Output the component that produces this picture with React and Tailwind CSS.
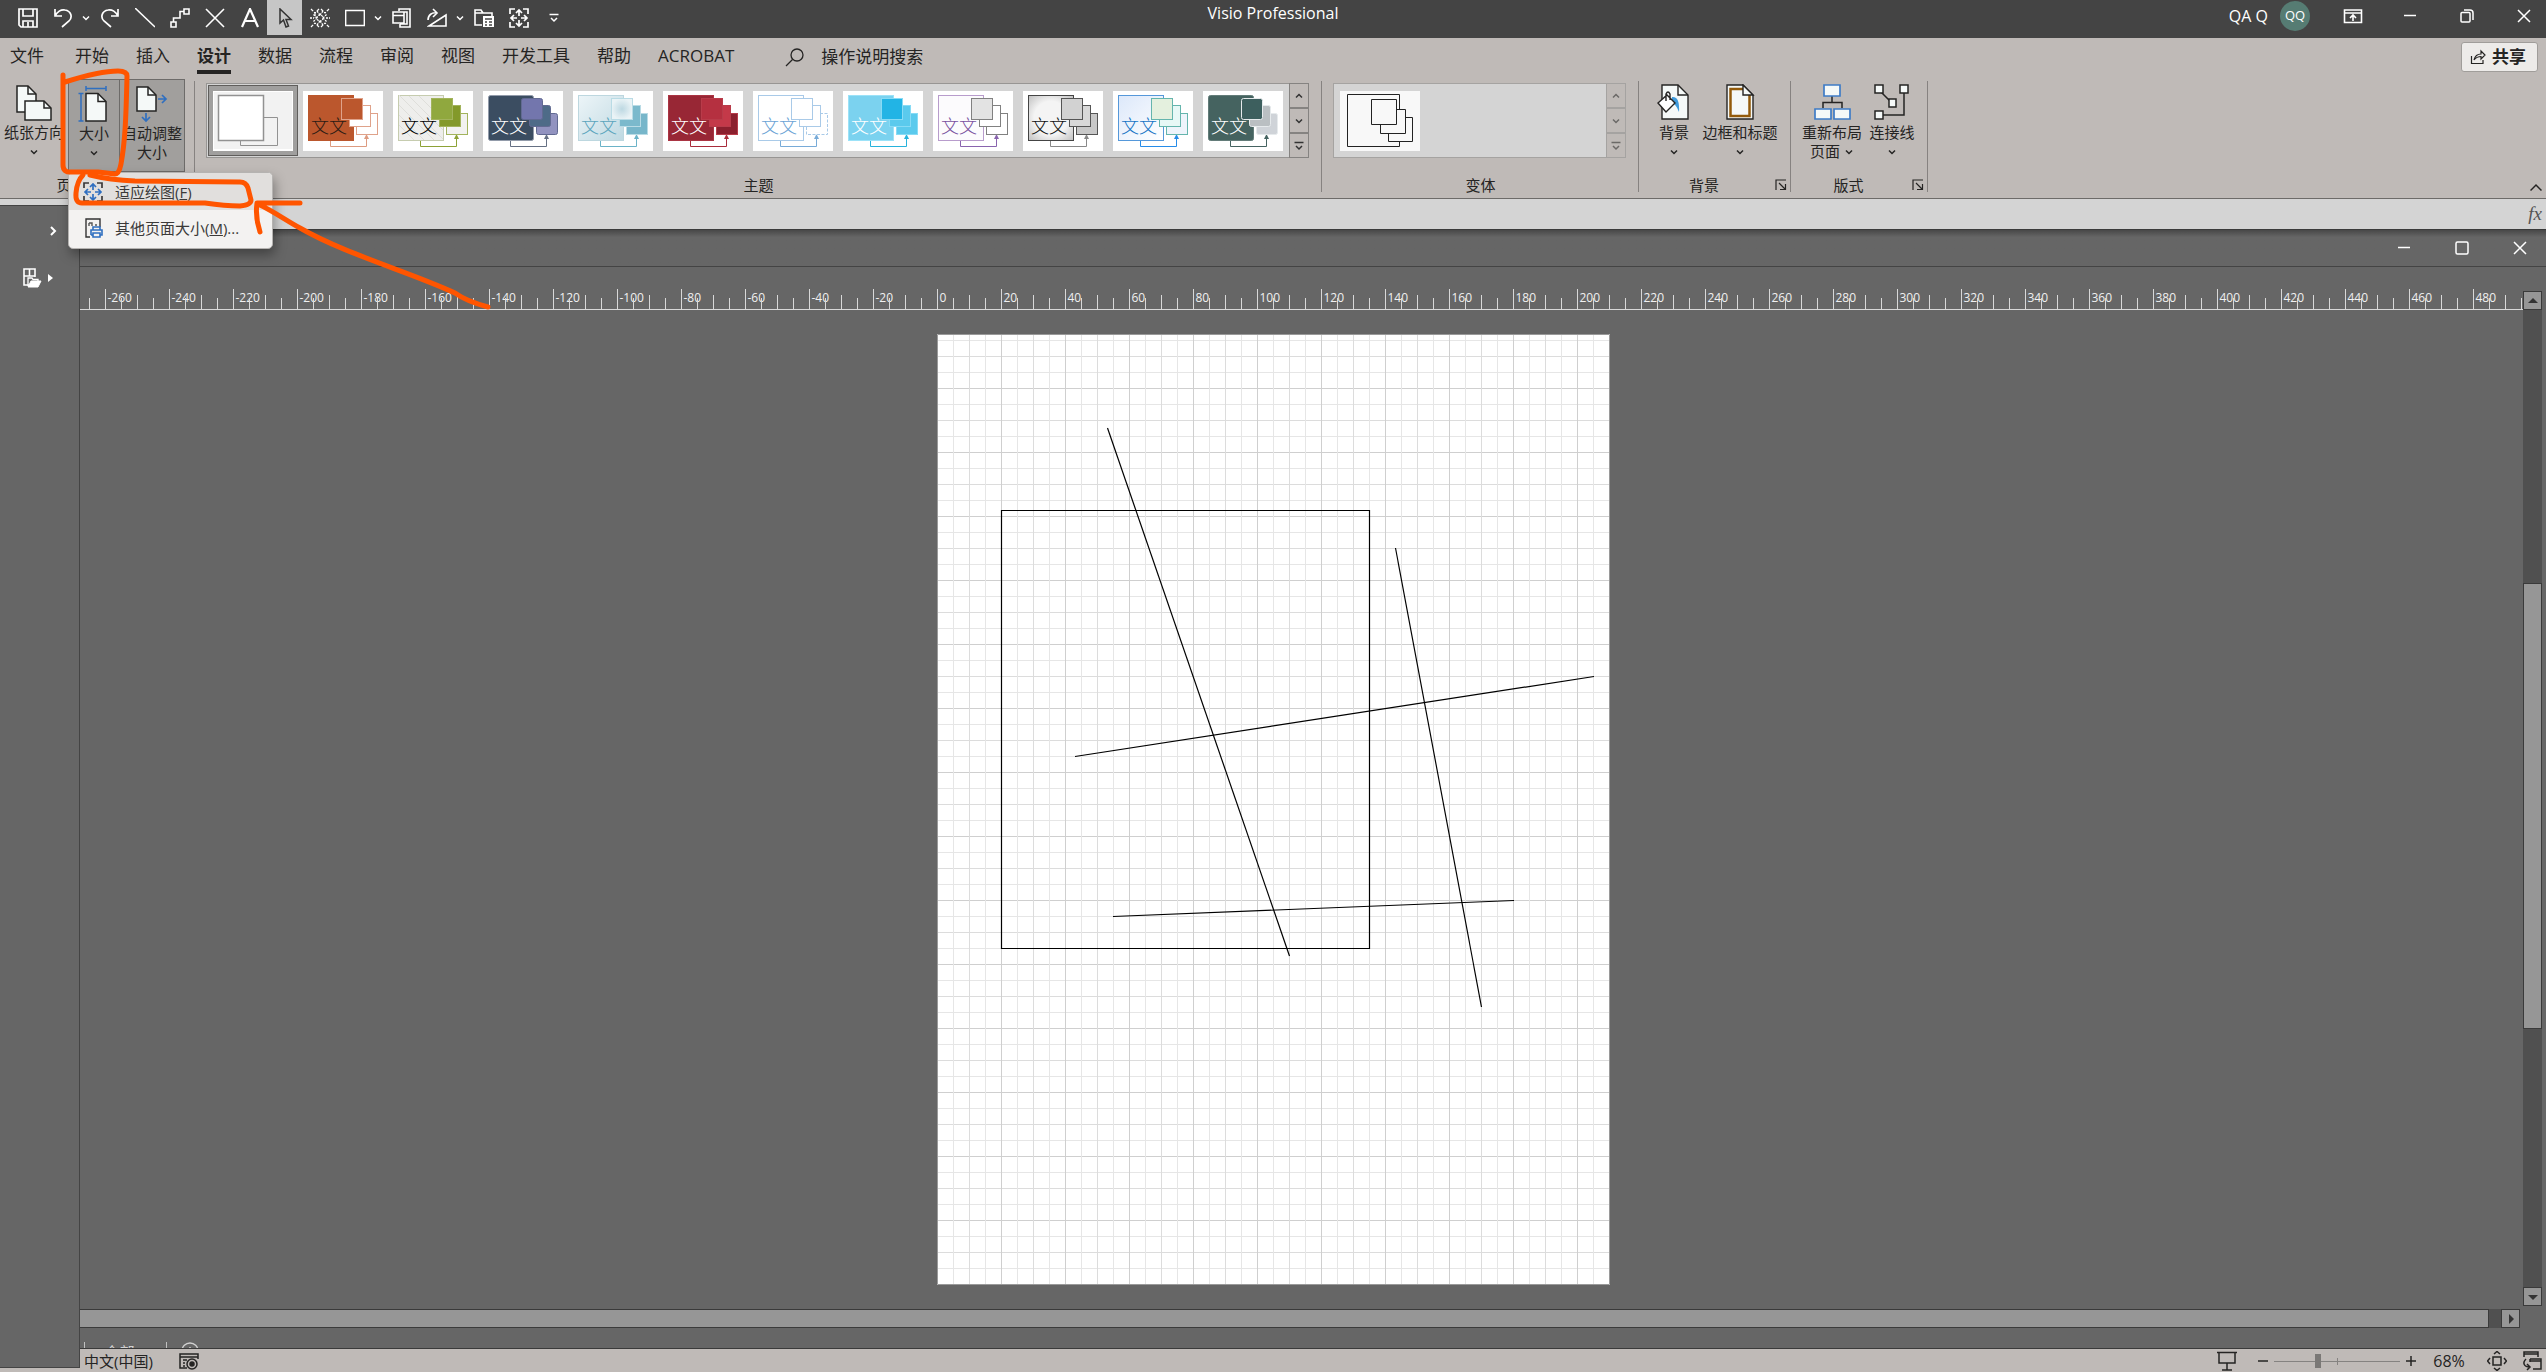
import { useState } from "react";

const FONT = "font-['Open_Sans','Noto_Sans_CJK_SC',sans-serif]";

// Small icon helpers
function Icon({ children, size = 20, color = "currentColor", width = 1.3 }) {
    return (
        <svg
            width={size}
            height={size}
            viewBox={`0 0 ${size} ${size}`}
            fill="none"
            stroke={color}
            strokeWidth={width}
            className="shrink-0"
            aria-hidden="true"
        >
            {children}
        </svg>
    );
}

function Chevron({ up = false, bar = false }) {
    return (
        <svg width="10" height="10" viewBox="0 0 10 10" fill="none" stroke="currentColor" strokeWidth="1.5" aria-hidden="true">
            {bar && <path d="M0.500 1.500H9.500" />}
            <path d={up ? "M2 6.500L5 3.500L8 6.500" : bar ? "M2 5L5 8L8 5" : "M2 3.500L5 6.500L8 3.500"} />
        </svg>
    );
}

function FitIcon({ arrows = "currentColor" }) {
    return (
        <Icon width={1.7}>
            <path d="M1 6V1H6M14 1H19V6M19 14V19H14M6 19H1V14" />
            <path stroke={arrows} d="M10 8V2M7 5L10 2L13 5M10 12V18M7 15L10 18L13 15M8 10H2M5 7L2 10L5 13M12 10H18M15 7L18 10L15 13" />
        </Icon>
    );
}

const quickTools = [
    { name: "保存", icon: <Icon width={1.7}><path d="M1 1H19V19H3L1 17ZM5 1V8H15V1M5 19V13H15V19M10 14V19" /></Icon> },
    { name: "撤消", menu: true, icon: <Icon width={1.7}><path d="M2 1V8H9M2 8C4 4 8 1 12 2C18 3 20 9 16 13L9 19" /></Icon> },
    { name: "恢复", icon: <Icon width={1.7}><path d="M18 1V8H11M18 8C16 4 12 1 8 2C2 3 0 9 4 13L11 19" /></Icon> },
    { name: "线条", icon: <Icon width={1.6}><path d="M0 0L20 19" /></Icon> },
    { name: "连接线", icon: <Icon width={1.6}><path d="M14 1H19V6H14ZM1 14H6V19H1ZM14 3.500H10V10H3.500V14" /></Icon> },
    { name: "连接点", icon: <Icon width={1.6}><path d="M1 1L19 19M19 1L1 19" /></Icon> },
    { name: "文本", icon: <Icon width={2.2}><path d="M2 19L10 1L18 19M5 13H15" /></Icon> },
    { name: "指针工具", active: true, icon: <Icon width={1.5}><path d="M5 1V15L8.500 12L11 19L13.500 18L11 11.500H16Z" /></Icon> },
    {
        name: "组合",
        icon: (
            <Icon width={1.3}>
                <path strokeDasharray="3 1.500" d="M1 1L5 5M9 1L5 5M5 5V10M11 1L15 5M19 1L15 5M1 19L5 15M9 19L5 15M11 19L15 15M19 19L15 15" />
                <circle cx="10" cy="10" r="3" strokeDasharray="2 1" />
                <path strokeDasharray="2 1" d="M7 10L3 6M7 10L3 14M13 10L17 6M13 10L17 14M0 10H4M16 10H20M10 7L7 3M10 7L13 3M10 13L7 17M10 13L13 17" />
            </Icon>
        ),
    },
    { name: "矩形", menu: true, icon: <Icon width={1.4}><path d="M0.700 2.500H19.300V17.500H0.700Z" /></Icon> },
    { name: "置于顶层", icon: <Icon width={1.6}><path d="M7 3V1H18V19H8V16M1 4H12V15H1ZM1 7.500H12M12 4H15V16H8" /></Icon> },
    { name: "旋转", menu: true, icon: <Icon width={1.6}><path d="M2 18H19V7ZM1 12C1 7 5 4 10 5M6 1L10 5L6 9" /></Icon> },
    {
        name: "文件夹",
        icon: (
            <Icon width={1.6}>
                <path d="M8 17H1V2H7L9 5H18V9M1 5H9" />
                <path fill="currentColor" stroke="none" d="M9 8H20V19H9Z" />
                <path stroke="#444" d="M11 11H18M11 14H13M11 17H13M15 14H18M15 17H18" />
            </Icon>
        ),
    },
    { name: "适应绘图", icon: <FitIcon /> },
];

function TitleBar() {
    return (
        <header className="flex h-[38px] shrink-0 items-start bg-[#444444] text-white">
            <div className="flex-1">
                <div className="ml-[10px] flex h-[35px]">
                    {quickTools.map((tool) => (
                        <div key={tool.name} className="flex">
                            <button
                                aria-label={tool.name}
                                className={`flex h-[35px] w-[35px] items-center justify-center ${tool.active ? "bg-[#c6c6c6] text-[#333]" : ""}`}
                            >
                                {tool.icon}
                            </button>
                            {tool.menu && (
                                <button aria-label={`${tool.name}选项`} className="flex w-3 items-center justify-center">
                                    <Chevron />
                                </button>
                            )}
                        </div>
                    ))}
                    <button aria-label="自定义快速访问工具栏" className="flex w-9 items-center justify-center">
                        <Chevron bar />
                    </button>
                </div>
            </div>
            <h1 className="pt-[3px] text-[16px] leading-5">Visio Professional</h1>
            <div className="flex h-8 flex-1 items-center justify-end">
                <span className="text-[16px]">QA Q</span>
                <span className="mr-[21px] ml-3 flex h-[30px] w-[30px] items-center justify-center rounded-full bg-[#567c73] text-[13px]">QQ</span>
                <div className="flex gap-[13px]">
                    <button aria-label="功能区显示选项" className="flex w-11 justify-center">
                        <Icon width={1.6}><path d="M1.500 4H18.500V16.500H1.500ZM1.500 7H18.500M10 15V9M7 12L10 9L13 12" /></Icon>
                    </button>
                    <WindowButtons restore />
                </div>
            </div>
        </header>
    );
}

function WindowButtons({ restore = false }) {
    return (
        <>
            <button aria-label="最小化" className="flex w-11 justify-center">
                <Icon width={1.5}><path d="M4 9.500H16" /></Icon>
            </button>
            <button aria-label="最大化" className="flex w-11 justify-center">
                <Icon width={1.5}>
                    {restore ? (
                        <path d="M5 6.500H12Q13 6.500 13 7.500V15Q13 16 12 16H5Q4 16 4 15V7.500Q4 6.500 5 6.500ZM7 4H13Q16 4 16 7V14" />
                    ) : (
                        <rect x="4" y="4" width="12" height="12" rx="1.500" />
                    )}
                </Icon>
            </button>
            <button aria-label="关闭" className="flex w-11 justify-center">
                <Icon width={1.5}><path d="M4 4L16 16M16 4L4 16" /></Icon>
            </button>
        </>
    );
}

const tabs = ["开始", "插入", "设计", "数据", "流程", "审阅", "视图", "开发工具", "帮助", "ACROBAT"];

function TabRow({ current, onSelect }) {
    return (
        <nav className="flex h-10 shrink-0 items-start justify-between pr-2 pl-[10px] text-[17px] leading-6 text-[#252423]">
            <div className="flex gap-[27px] pt-[6px]">
                <button className="mr-1 h-[30px] pb-[6px]">文件</button>
                {tabs.map((tab) => (
                    <button
                        key={tab}
                        onClick={() => onSelect(tab)}
                        className={`h-[30px] border-b-4 pb-[6px] ${tab === current ? "border-[#252423] font-bold" : "border-transparent"}`}
                    >
                        {tab}
                    </button>
                ))}
                <button className="ml-6 flex h-[26px] items-center gap-4">
                    <Icon width={1.3}>
                        <circle cx="12" cy="8" r="6" />
                        <path d="M7.500 12.500L1 19" />
                    </Icon>
                    操作说明搜索
                </button>
            </div>
            <button className="mt-1 flex h-[30px] items-center gap-[6px] rounded-[3px] border border-[#a09d9a] bg-[#edebe9] pr-[11px] pl-2 font-bold">
                <Icon size={16} width={1.2}>
                    <path d="M1.500 7V14.500H13V11M4 11C5 7 7 5 11 5V2L15 6L11 10V7.500C8 7.500 6 8.500 4 11Z" />
                </Icon>
                共享
            </button>
        </nav>
    );
}

// Colours of each theme thumbnail
const themes = [
    { name: "Office", plain: true },
    { name: "线性", big: "#bb572d", text: "#2b1b14", front: "#bb572d", mid: "#ffffff", back: "#ffffff", edge: "#dfa28a", bigEdge: "#bb572d", line: "#dd9b80" },
    { name: "Zephyr", big: "#eeeeec", text: "#000000", front: "#90a83e", mid: "#83992a", back: "#f2f2f0", edge: "#a2b35c", bigEdge: "#c6ccaf", line: "#8da236", hatch: true },
    { name: "集成", big: "#3b4d61", text: "#ffffff", front: "#7376ad", mid: "#4e6b88", back: "#9293c0", edge: "#626a92", bigEdge: "#929baa", line: "#657083", round: 2 },
    { name: "简单", big: "url(#paleBlue)", text: "#5ba5bd", front: "url(#frost)", mid: "#7bb9cc", back: "#77b6ca", edge: "#b9dbe5", bigEdge: "#bdd7df", line: "#6bb3c8" },
    { name: "丝状", big: "#982735", text: "#ffffff", front: "#b53040", mid: "#c43949", back: "#8b202e", edge: "#b83c4a", bigEdge: "#aa3543", line: "#a92c3b" },
    { name: "铅笔", big: "#ffffff", text: "#6aa3d5", front: "#ffffff", mid: "#ffffff", back: "#ffffff", edge: "#a9cae8", bigEdge: "#a9cae8", line: "#78abd8", dashed: true },
    { name: "序列", big: "#7bd2ef", text: "#ffffff", front: "#22b4e5", mid: "#5bcaed", back: "#5bcaed", edge: "#88dbf5", bigEdge: "#9ce2f8", line: "#27b3dc" },
    { name: "切片", big: "#fcfbfd", text: "#7950a0", front: "#e3e3e3", mid: "#ffffff", back: "#ffffff", edge: "#818181", bigEdge: "#b89ccc", line: "#8964ae" },
    { name: "离子", big: "url(#grey)", text: "#111111", front: "#d2d2d2", mid: "#d8d8d8", back: "#c8c8c8", edge: "#555555", bigEdge: "#444444", line: "#888888" },
    { name: "盖亚", big: "url(#ice)", text: "#1674c5", front: "#e4f0de", mid: "#e7f8f6", back: "#eef4fb", edge: "#65b5ad", bigEdge: "#5598da", line: "#268ce9" },
    { name: "风化", big: "#456360", text: "#ffffff", front: "#3d5f5e", mid: "#babfc2", back: "#cfd3d8", edge: "#e6eaec", bigEdge: "#637c79", line: "#456361", round: 2 },
];

function ThemeThumb({ theme }) {
    if (theme.plain) {
        return (
            <svg width="80" height="60" viewBox="0 0 80 60" fill="none" stroke="#929292" className="bg-white" aria-hidden="true">
                <path d="M1 1H79V58H1Z" fill="#f2f2f2" stroke="none" />
                <path d="M27.500 26.500H64.500V54.500H27.500Z" />
                <path d="M5.500 4.500H50.500V49.500H5.500Z" fill="#fff" strokeWidth="1.500" />
            </svg>
        );
    }
    const r = theme.round || 0;
    return (
        <svg width="80" height="60" viewBox="0 0 80 60" fill="none" className="bg-white" aria-hidden="true">
            <path d="M27.500 49V55.500H63.500V46" stroke={theme.line} />
            <path d="M61 48L63.500 43L66 48Z" fill={theme.line} />
            <rect x="5.500" y="4.500" width="45" height="45" rx={r} fill={theme.big} stroke={theme.bigEdge} />
            {theme.hatch && (
                <path d="M6 14L41 49M6 4L50 48M16 5L50 39M26 5L50 29M6 24L31 49M6 34L21 49" stroke="#dededa" />
            )}
            <rect x="53.500" y="22.500" width="21" height="21" rx={r} fill={theme.back} stroke={theme.edge} strokeDasharray={theme.dashed ? "3 1.500" : undefined} />
            <rect x="46.500" y="14.500" width="21" height="21" rx={r} fill={theme.mid} stroke={theme.edge} />
            <text x="8" y="42" fontSize="18" fontWeight="300" fill={theme.text}>文文</text>
            <rect x="38.500" y="7.500" width="21" height="21" rx={r} fill={theme.front} stroke={theme.edge} />
        </svg>
    );
}

function GradientDefs() {
    return (
        <svg width="0" height="0" className="absolute" aria-hidden="true">
            <defs>
                <linearGradient id="paleBlue" x1="0" y1="0" x2="1" y2="1">
                    <stop offset="0" stopColor="#edf5f8" />
                    <stop offset="1" stopColor="#bfd9e2" />
                </linearGradient>
                <radialGradient id="frost">
                    <stop offset="0" stopColor="#bdd8e2" />
                    <stop offset="1" stopColor="#eaf3f6" />
                </radialGradient>
                <radialGradient id="grey" r="0.75">
                    <stop offset="0.500" stopColor="#f4f4f4" />
                    <stop offset="1" stopColor="#b8b8b8" />
                </radialGradient>
                <linearGradient id="ice" x1="0" y1="0" x2="1" y2="1">
                    <stop offset="0" stopColor="#dce8fa" />
                    <stop offset="1" stopColor="#ffffff" />
                </linearGradient>
            </defs>
        </svg>
    );
}

function GalleryScroll({ muted = false }) {
    return (
        <div className={`flex w-5 flex-col divide-y-2 border ${muted ? "divide-[#a5a3a1] border-[#a5a3a1] text-[#6b6967]" : "divide-[#858381] border-[#858381] bg-[#bfbab7] text-[#333]"}`}>
            <button aria-label="上一行" className="flex flex-1 items-center justify-center"><Chevron up /></button>
            <button aria-label="下一行" className="flex flex-1 items-center justify-center"><Chevron /></button>
            <button aria-label="更多" className="flex flex-1 items-center justify-center"><Chevron bar /></button>
        </div>
    );
}

function Group({ label, launcher = false, className = "", children }) {
    return (
        <section className={`relative flex h-[120px] flex-col ${className}`}>
            <div className="flex h-[98px] items-start">{children}</div>
            <div className="flex items-center text-[15px] leading-[18px]">
                <span className="flex-1 text-center">{label}</span>
                {launcher && (
                    <button aria-label={`${label}设置`} className="mr-1 ml-[6px]">
                        <Icon size={12} width={1.2}><path d="M1 11V1H11M4 4L10 10M10.500 5V10.500H5" /></Icon>
                    </button>
                )}
            </div>
            <div className="absolute top-[3px] right-0 h-[111px] w-px bg-[#868280]" />
        </section>
    );
}

function BigButton({ icon, lines, arrow = false, inlineArrow = false, className = "" }) {
    return (
        <button className={`flex h-[93px] flex-col items-center pt-[5px] text-[15px] leading-[19px] whitespace-nowrap ${className}`}>
            <span className="mb-px flex h-[38px]">{icon}</span>
            <span>{lines[0]}</span>
            {arrow && <span className="flex h-[19px] items-center"><Chevron /></span>}
            {lines[1] && (
                <span className="flex items-center gap-1">
                    {lines[1]}
                    {inlineArrow && <Chevron />}
                </span>
            )}
        </button>
    );
}

const orientationIcon = (
    <Icon size={38} color="#252423" width={1.5}>
        <path fill="#f5f9f8" d="M2 2H13L21 10V28H2Z" />
        <path d="M13 2V10H21" />
        <path fill="#f5f9f8" d="M10 17H29L36 24V36H10Z" />
        <path d="M29 17V24H36" />
    </Icon>
);

const sizeIcon = (
    <Icon size={38} color="#252423" width={1.5}>
        <path stroke="#2f6fc0" d="M11 3.500H31M11 1V6M31 1V6M6 8V36M3.500 8.500H8.500M3.500 36H8.500" />
        <path fill="#f5f9f8" d="M11 8.500H23L31 16.500V36H11Z" />
        <path d="M23 8.500V16.500H31" />
    </Icon>
);

const autoSizeIcon = (
    <Icon size={38} color="#252423" width={1.5}>
        <path fill="#f5f9f8" d="M4 2H15L23 10V26H4Z" />
        <path d="M15 2V10H23" />
        <path stroke="#2f6fc0" strokeWidth="1.700" d="M25 14H33M29 10L33 14L29 18M13 28V36M9 32L13 36L17 32" />
    </Icon>
);

const backgroundIcon = (
    <Icon size={38} color="#252423" width={1.4}>
        <path fill="#f5f9f8" d="M7 1H23L33 11V35H7Z" />
        <path d="M23 1V11H33" />
        <path fill="#3f9bdc" stroke="none" d="M17 13Q25 12 24 28Q21 20 17 19Z" />
        <path fill="#fff" d="M3 19L12 11L20 19L11 28ZM11 17V10Q13 6 15 10V16" />
    </Icon>
);

const borderIcon = (
    <Icon size={38} color="#252423" width={1.4}>
        <path fill="#f5f9f8" d="M6 1H22L32 11V35H6Z" />
        <path stroke="#935b0b" strokeWidth="2.500" d="M22 5H9.500V32H28.500V11" />
        <path fill="#f5f9f8" d="M22 1V11H32Z" />
    </Icon>
);

const layoutIcon = (
    <Icon size={38} color="#252423" width={1.5}>
        <path d="M19 12V18M10 24V18.500H29V24" />
        <path fill="#f5f9f8" stroke="#3f7cc6" strokeWidth="1.700" d="M11 1H27V12H11ZM2 25H18V35H2ZM21 25H37V35H21Z" />
    </Icon>
);

const connectorIcon = (
    <Icon size={38} color="#252423" width={1.5}>
        <path d="M6 6L19 19M31 9V31H10" />
        <path fill="#f5f9f8" d="M2 1H10V9H2ZM27 1H35V9H27ZM16 15H23V23H16ZM2 27H10V35H2Z" />
    </Icon>
);

function SizeMenu() {
    return (
        <div role="menu" className="absolute top-[93px] left-0 z-10 w-[205px] overflow-hidden rounded-[5px] border border-[#b5b3b1] bg-[#f3f2f1] pb-[3px] text-[15px] leading-[22px] text-[#3b3a39] shadow-[2px_6px_12px_rgba(0,0,0,0.35)]">
            <button role="menuitem" className="flex h-[37px] w-full items-center gap-3 bg-[#e1dfdd] pl-[14px] whitespace-nowrap">
                <FitIcon arrows="#2f6fc0" />
                <span>适应绘图(<u>F</u>)</span>
            </button>
            <button role="menuitem" className="flex h-[35px] w-full items-center gap-3 pl-[14px] whitespace-nowrap">
                <Icon width={1.4}>
                    <path d="M7 19H3V1H17V9" stroke="#333" />
                    <path d="M6 5H9V8M6 5V8M12 7H14" stroke="#555" />
                    <path stroke="#2f6fc0" strokeWidth="1.600" d="M10 12V9H17V12M8 17V12H19V17H17M10 17H8M10 15H17V19H10Z" />
                </Icon>
                <span>其他页面大小(<u>M</u>)...</span>
            </button>
        </div>
    );
}

function Ribbon() {
    return (
        <div className="relative flex h-[120px] shrink-0 text-[#252423]">
            <Group label="页面设置" launcher className="w-[195px]">
                <BigButton icon={orientationIcon} lines={["纸张方向"]} arrow className="mt-px w-[68px]" />
                <div className="relative mt-px">
                    <BigButton icon={sizeIcon} lines={["大小"]} arrow className="w-[52px] border border-[#6d6b69] bg-[#a19f9d]" />
                    <SizeMenu />
                </div>
                <BigButton icon={autoSizeIcon} lines={["自动调整", "大小"]} className="mt-px w-[65px] border border-l-0 border-[#6d6b69] bg-[#a19f9d]" />
            </Group>
            <Group label="主题" className="w-[1127px]">
                <div className="mt-[5px] ml-[11px] flex h-[75px]">
                    <div className="flex border border-r-0 border-[#979593] bg-[#d4d4d4] p-px">
                        {themes.map((theme) => (
                            <button
                                key={theme.name}
                                aria-label={theme.name}
                                className={`flex h-[71px] w-[90px] items-center justify-center ${theme.plain ? "border border-[#605e5c] bg-[#a09f9e]" : ""}`}
                            >
                                <ThemeThumb theme={theme} />
                            </button>
                        ))}
                    </div>
                    <GalleryScroll />
                </div>
            </Group>
            <Group label="变体" className="w-[317px]">
                <div className="mt-[5px] ml-[11px] flex h-[75px]">
                    <div className="flex w-[273px] items-center border border-r-0 border-[#a5a3a1] bg-[#d4d4d4] pl-[6px]">
                        <button aria-label="变体 1">
                            <svg width="80" height="60" viewBox="0 0 80 60" fill="#f8f8f8" stroke="#222" className="bg-[#f8f8f8]" aria-hidden="true">
                                <path d="M7.500 3.500H59.500V55.500H7.500Z" />
                                <path d="M48.500 26.500H72.500V50.500H48.500Z" />
                                <path d="M40.500 18.500H65.500V42.500H40.500Z" />
                                <path d="M31.500 8.500H56.500V33.500H31.500Z" />
                            </svg>
                        </button>
                    </div>
                    <GalleryScroll muted />
                </div>
            </Group>
            <Group label="背景" launcher className="w-[152px]">
                <BigButton icon={backgroundIcon} lines={["背景"]} arrow className="mt-px ml-[10px] w-[50px]" />
                <BigButton icon={borderIcon} lines={["边框和标题"]} arrow className="mt-px w-[82px]" />
            </Group>
            <Group label="版式" launcher className="w-[137px]">
                <BigButton icon={layoutIcon} lines={["重新布局", "页面"]} inlineArrow className="mt-px ml-2 w-[66px]" />
                <BigButton icon={connectorIcon} lines={["连接线"]} arrow className="mt-px w-[54px]" />
            </Group>
            <div className="flex flex-1 items-end justify-end pr-1 pb-1">
                <button aria-label="折叠功能区">
                    <Icon size={12} width={1.5}><path d="M0.500 8.500L6 3L11.500 8.500" /></Icon>
                </button>
            </div>
        </div>
    );
}

const SCALE = 3.2; // pixels per millimetre at 68%
const ORIGIN = 857; // x of the page's left edge inside the drawing area

function Ruler() {
    const ticks = [];
    for (let mm = -265; mm <= 495; mm += 5) ticks.push(mm);
    return (
        <svg className="block h-[43px] w-full" aria-hidden="true">
            {ticks.map((mm) => {
                const x = ORIGIN + mm * SCALE + 0.5;
                const top = mm % 20 === 0 ? 22 : mm % 10 === 0 ? 28 : 31;
                return (
                    <g key={mm}>
                        <path d={`M${x} ${top}V42`} stroke="#d8d8d8" />
                        {mm % 20 === 0 && (
                            <text x={x + 2} y="35" fontSize="12" fill="#f0f0f0">{mm}</text>
                        )}
                    </g>
                );
            })}
            <path d="M0 42.500H2443" stroke="#d8d8d8" />
        </svg>
    );
}

function Page() {
    const vertical = [];
    for (let i = 1; i < 42; i++) vertical.push(i);
    const horizontal = [];
    for (let i = 1; i < 60; i++) horizontal.push(i);
    const shade = (i) => (i % 4 === 0 ? "#cfcfcf" : i % 2 === 0 ? "#dcdcdc" : "#e6e6e6");
    return (
        <svg
            width="673"
            height="951"
            viewBox="0 0 673 951"
            fill="none"
            className="absolute top-6 left-[857px] bg-white"
            role="img"
            aria-label="绘图页"
        >
            {horizontal.map((i) => (
                <path key={i} d={`M0 ${950.5 - i * 16}H673`} stroke={shade(i)} />
            ))}
            {vertical.map((i) => (
                <path key={i} d={`M${i * 16 + 0.5} 0V951`} stroke={shade(i)} />
            ))}
            <path d="M0.500 0.500H672.500V950.500H0.500Z" stroke="#9a9a9a" />
            <g stroke="#000" strokeWidth="1.2">
                <path d="M64.500 176.500H432.500V614.500H64.500Z" />
                <path d="M170.500 94L352.500 622" />
                <path d="M138 422.500L657 342.500" />
                <path d="M176 582.500L577 566.500" />
                <path d="M458.500 214L544.500 673" />
            </g>
        </svg>
    );
}

function ScrollArrow({ d, label }) {
    return (
        <button aria-label={label} className="flex h-[19px] w-[19px] shrink-0 items-center justify-center border border-[#3a3a3a] bg-[#969696]">
            <svg width="10" height="10" viewBox="0 0 10 10" fill="#333" aria-hidden="true"><path d={d} /></svg>
        </button>
    );
}

function DrawingWindow() {
    return (
        <div className="flex min-h-0 flex-1 flex-col bg-[#666666]">
            <div className="flex h-[37px] shrink-0 items-center justify-end gap-[14px] border-b border-[#444] bg-linear-to-b from-[#484848] to-[#666666] to-20% pr-1 text-white">
                <WindowButtons />
            </div>
            <div className="flex min-h-0 flex-1">
                <div className="flex min-w-0 flex-1 flex-col">
                    <Ruler />
                    <div className="relative min-h-0 flex-1 overflow-hidden">
                        <Page />
                    </div>
                </div>
                <div className="mt-6 mr-1 mb-[3px] flex w-[19px] flex-col bg-[#505050]">
                    <ScrollArrow label="向上滚动" d="M0 7L5 2L10 7Z" />
                    <div className="flex-[274]" />
                    <div className="flex-[444] border border-[#3a3a3a] bg-[#969696]" />
                    <div className="flex-[259]" />
                    <ScrollArrow label="向下滚动" d="M0 3L5 8L10 3Z" />
                </div>
            </div>
            <div className="mr-[26px] flex h-[19px] shrink-0 bg-[#505050]">
                <div className="flex-1 border-y border-r border-[#3a3a3a] bg-[#969696]" />
                <div className="w-3" />
                <ScrollArrow label="向右滚动" d="M3 0L8 5L3 10Z" />
            </div>
            {/* page tabs, mostly hidden under the status bar */}
            <div className="h-5 shrink-0 overflow-hidden pt-[14px] pl-1 text-[15px] leading-5 text-[#d0d0d0]">
                <div className="flex">
                    <button className="flex w-[83px] justify-center border-x border-[#c0c0c0] pr-3">全部</button>
                    <button aria-label="插入页" className="ml-[14px]">
                        <Icon width={1.4}>
                            <circle cx="9" cy="9" r="8" />
                            <path d="M9 5V13M5 9H13" />
                        </Icon>
                    </button>
                </div>
            </div>
        </div>
    );
}

function StatusBar() {
    const [zoom, setZoom] = useState(34);
    return (
        <footer className="flex h-6 shrink-0 items-center justify-between border-t border-[#3a3a3a] bg-[#bfbab7] pt-px pr-1 pl-1 text-[15px] text-[#252423]">
            <div className="flex items-center gap-[26px]">
                <span>中文(中国)</span>
                <button aria-label="宏录制">
                    <Icon width={1.5}>
                        <path d="M8 17H1V3H19V8M1 6H19M4 9H8M4 12H6M4 15H6" />
                        <circle cx="13" cy="13" r="5" />
                        <circle cx="13" cy="13" r="2" fill="currentColor" />
                    </Icon>
                </button>
            </div>
            <div className="flex items-center">
                <button aria-label="演示模式" className="mr-5">
                    <Icon width={1.5}><path d="M0 1.500H20M2 2V12H18V2M10 12V19M5 19H15" /></Icon>
                </button>
                <button aria-label="缩小"><Icon size={12} width={1.5}><path d="M1 6H11" /></Icon></button>
                <div className="relative mx-[5px] flex h-[14px] w-[126px] items-center">
                    <input
                        type="range"
                        aria-label="缩放"
                        value={zoom}
                        onChange={(e) => setZoom(Number(e.target.value))}
                        className="h-px w-full appearance-none bg-[#858381] [&::-webkit-slider-thumb]:h-[14px] [&::-webkit-slider-thumb]:w-[6px] [&::-webkit-slider-thumb]:appearance-none [&::-webkit-slider-thumb]:bg-[#7a7876]"
                    />
                    <div className="absolute top-1 left-1/2 h-[7px] w-px bg-[#858381]" />
                </div>
                <button aria-label="放大"><Icon size={12} width={1.5}><path d="M1 6H11M6 1V11" /></Icon></button>
                <button className="ml-[14px] w-9 text-[16px] leading-5">68%</button>
                <button aria-label="适应窗口" className="ml-5">
                    <Icon width={1.5}><path d="M6 6H14V14H6ZM7 3L10 0.500L13 3M7 17L10 19.500L13 17M3 7L0.500 10L3 13M17 7L19.500 10L17 13" /></Icon>
                </button>
                <button aria-label="切换窗口" className="ml-[15px]">
                    <Icon width={1.5}><path d="M2 6V1H16V6M2 3H16M8 8H19V18H11M8 8V11M8 10H19M4 8C0 12 2 16 8 16M5 13L8 16L5 19" /></Icon>
                </button>
            </div>
        </footer>
    );
}

// Hand-drawn marks that point out the menu entry
function Annotation() {
    return (
        <svg
            width="520"
            height="330"
            viewBox="0 0 520 330"
            fill="none"
            stroke="#ff5500"
            strokeWidth="5"
            strokeLinecap="round"
            strokeLinejoin="round"
            className="pointer-events-none absolute top-0 left-0 z-20"
            aria-hidden="true"
        >
            <path d="M63 75V165Q63 173 72 172H98L115 174Q119 174 121 164C125 142 126 120 127 76Q127 71 118 71Q100 71 65 82" />
            <path d="M90 175Q110 180 135 181L240 182Q246 182 248 188L251 200Q251 205 240 206Q225 206 205 203H82Q75 203 76 193Q77 181 83 175" />
            <path d="M300 203H257Q255 217 260 232M258 204C273 211 287 221 300 228C345 254 410 272 455 293Q466 301 488 307" />
        </svg>
    );
}

export default function App() {
    const [tab, setTab] = useState("设计");

    return (
        <div className={`relative flex h-screen flex-col overflow-hidden bg-[#bfbab7] ${FONT}`}>
            <GradientDefs />
            <TitleBar />
            <TabRow current={tab} onSelect={setTab} />
            <Ribbon />
            <div className="flex min-h-0 flex-1 border-t border-[#6d6b69]">
                <aside className="flex w-20 shrink-0 flex-col bg-[#bfbab7] pb-1">
                    <div className="h-[6px] bg-[#d4d4d4]" />
                    <div className="flex flex-1 flex-col border-t border-r border-b border-[#444] bg-[#666666] text-white">
                        <button aria-label="展开形状窗格" className="mt-5 mr-5 self-end">
                            <Icon size={10} width={2}><path d="M2 1L6 5L2 9" /></Icon>
                        </button>
                        <button aria-label="形状" className="mt-8 ml-[22px] flex items-center gap-[6px]">
                            <Icon width={1.6}>
                                <path d="M7 17H2V1H13V9M2 8H13M7.500 1V8" />
                                <path fill="currentColor" strokeWidth="1" d="M6 19L9 13H19L16 19Z" />
                                <path strokeWidth="1.300" d="M6 18V10H10L11 11.500H16V13" />
                            </Icon>
                            <svg width="5" height="8" viewBox="0 0 5 8" fill="currentColor" aria-hidden="true"><path d="M0 0L5 4L0 8Z" /></svg>
                        </button>
                    </div>
                </aside>
                <main className="flex min-w-0 flex-1 flex-col">
                    <div className="flex h-[31px] shrink-0 items-center justify-end border-b border-[#3a3a3a] bg-[#d4d4d4] pr-1">
                        <button aria-label="公式" className="font-['Liberation_Serif',serif] text-[19px] leading-6 text-[#555] italic">fx</button>
                    </div>
                    <DrawingWindow />
                    <StatusBar />
                </main>
            </div>
            <Annotation />
        </div>
    );
}
